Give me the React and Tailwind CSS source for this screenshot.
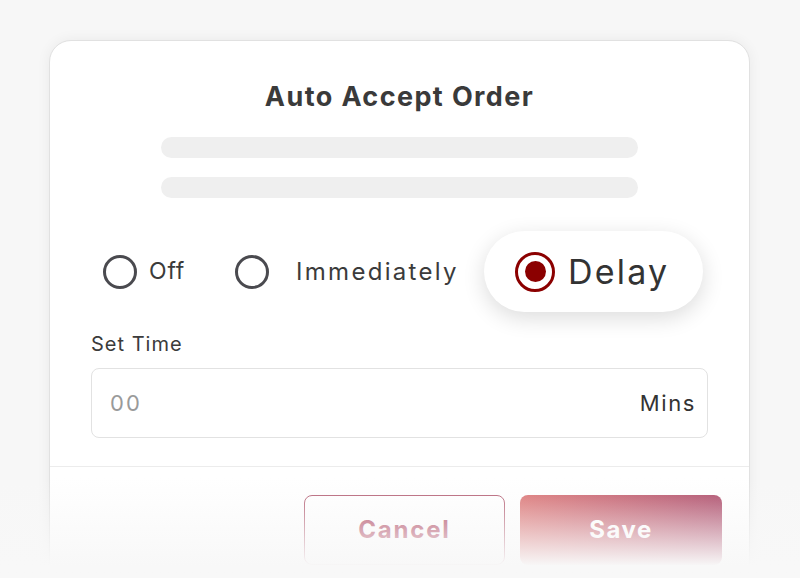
import React, { useState } from 'react';

const Radio = ({ checked, size = 34 }) => (
  <span
    className={`flex items-center justify-center rounded-full border-[3px] shrink-0 ${checked ? 'border-[#8b0000]' : 'border-[#4a4a4f]'}`}
    style={{ width: size, height: size }}
  >
    {checked && <span className="block w-[21px] h-[21px] rounded-full bg-[#8b0000]" />}
  </span>
);

const App = () => {
  const [mode, setMode] = useState('delay');

  return (
    <div className="relative h-[578px] w-full overflow-hidden bg-[#f7f7f7] pt-[40px] pl-[49px] font-['Inter','Open_Sans',sans-serif]">
      {/* Card */}
      <div className="w-[701px] rounded-[22px] border border-[#e1e1e1] bg-white pt-[40px] shadow-[0_0_14px_rgba(0,0,0,0.06)]">
        <h1 className="text-center text-[27px] leading-[32px] font-bold tracking-[1.4px] text-[#3a3a3a]">
          Auto Accept Order
        </h1>

        <div className="mt-6 flex flex-col items-center gap-[19px]">
          <div className="h-[21px] w-[477px] rounded-full bg-[#efefef]" />
          <div className="h-[21px] w-[477px] rounded-full bg-[#efefef]" />
        </div>

        {/* Options */}
        <div className="mt-[33px] flex h-[81px] items-center pl-[53px]">
          <button onClick={() => setMode('off')} className="flex w-[132px] items-center gap-3">
            <Radio checked={mode === 'off'} />
            <span className="text-[23px] tracking-[0.8px] text-[#3b3b3b]">Off</span>
          </button>
          <button onClick={() => setMode('now')} className="flex w-[249px] items-center gap-[27px]">
            <Radio checked={mode === 'now'} />
            <span className="text-[24px] tracking-[2.3px] text-[#3b3b3b]">Immediately</span>
          </button>
          <button
            onClick={() => setMode('delay')}
            className="flex h-[81px] w-[219px] items-center gap-[13px] rounded-full bg-white pl-[31px] shadow-[0_6px_22px_rgba(0,0,0,0.14)]"
          >
            <Radio checked={mode === 'delay'} size={40} />
            <span className="text-[34px] tracking-[2.2px] text-[#333]">Delay</span>
          </button>
        </div>

        <div className="px-[41px]">
          <label className="mt-5 block text-[20px] leading-[24px] tracking-[1px] text-[#3b3b3b]">Set Time</label>
          <div className="mt-3 flex h-[70px] items-center rounded-[8px] border-[1.5px] border-[#e2e2e2] pl-[18px] pr-[11px]">
            <input
              className="flex-1 bg-transparent text-[22px] tracking-[2px] text-[#333] outline-none placeholder:text-[#9a9a9a]"
              placeholder="00"
            />
            <span className="text-[22px] tracking-[1.6px] text-[#333]">Mins</span>
          </div>
        </div>

        <div className="mt-7 h-px w-full bg-[#ececec]" />

        {/* Footer */}
        <div className="flex justify-end gap-[15px] pt-7 pr-[27px] pb-10">
          <button className="h-[70px] w-[201px] rounded-[8px] border-[1.5px] border-[#b0566c] text-[24px] font-bold tracking-[1.8px] text-[#a8324f]">
            Cancel
          </button>
          <button className="h-[70px] w-[202px] rounded-[8px] bg-gradient-to-r from-[#d96b6b] to-[#a63d5e] text-[24px] font-bold tracking-[1.5px] text-white">
            Save
          </button>
        </div>
      </div>

      {/* bottom fade */}
      <div className="pointer-events-none absolute inset-x-0 top-[478px] h-[100px] bg-gradient-to-b from-[#f8f8f800] from-0% to-[#f8f8f8] to-[88%]" />
    </div>
  );
};

export default App;
